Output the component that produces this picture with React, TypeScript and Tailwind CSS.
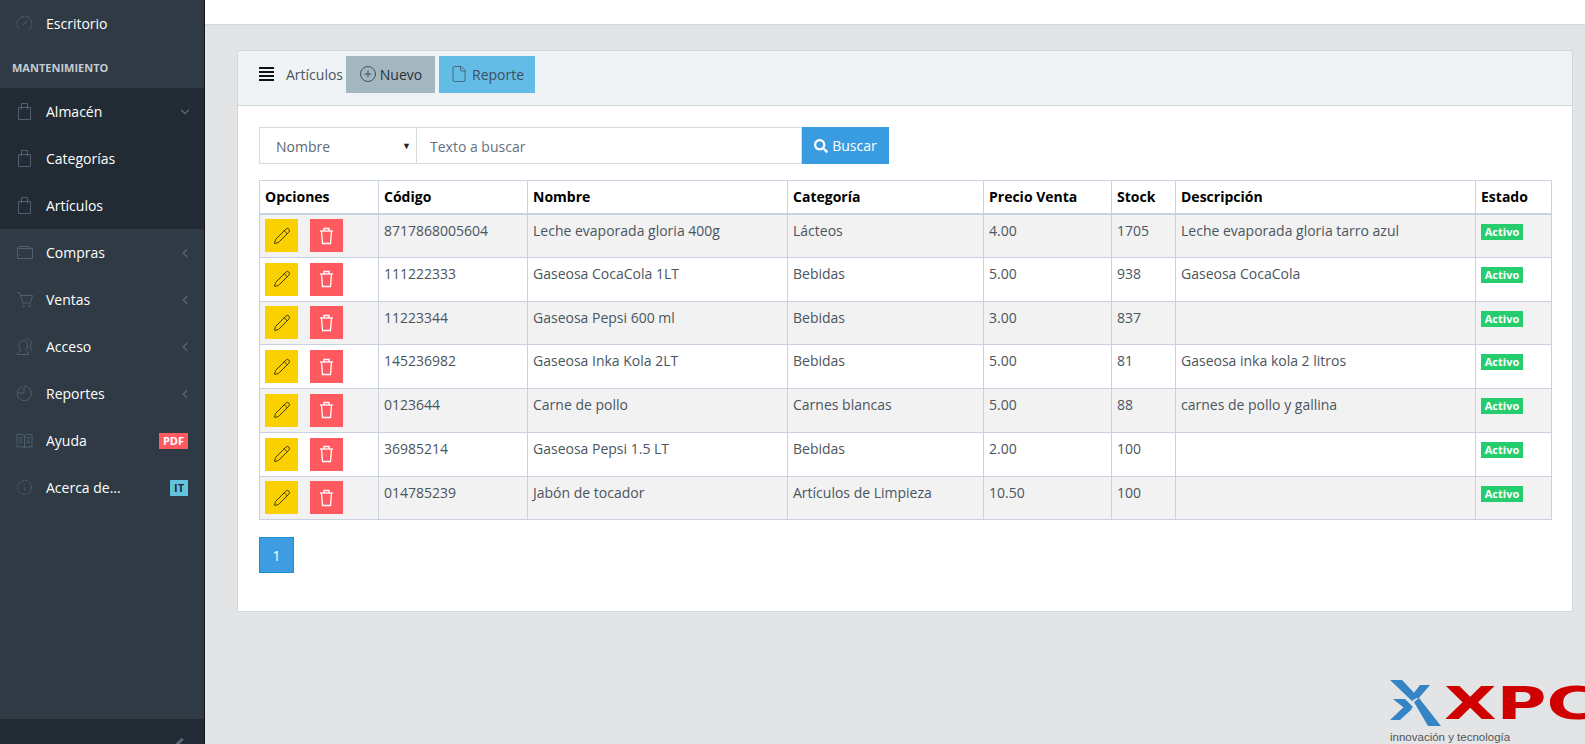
import React from 'react';
import { ChevronDown, ChevronLeft, CirclePlus, File, Info, Pencil } from 'lucide-react';
import { FaSearch } from 'react-icons/fa';

const rows = [
    ['8717868005604', 'Leche evaporada gloria 400g', 'Lácteos', '4.00', '1705', 'Leche evaporada gloria tarro azul'],
    ['111222333', 'Gaseosa CocaCola 1LT', 'Bebidas', '5.00', '938', 'Gaseosa CocaCola'],
    ['11223344', 'Gaseosa Pepsi 600 ml', 'Bebidas', '3.00', '837', ''],
    ['145236982', 'Gaseosa Inka Kola 2LT', 'Bebidas', '5.00', '81', 'Gaseosa inka kola 2 litros'],
    ['0123644', 'Carne de pollo', 'Carnes blancas', '5.00', '88', 'carnes de pollo y gallina'],
    ['36985214', 'Gaseosa Pepsi 1.5 LT', 'Bebidas', '2.00', '100', ''],
    ['014785239', 'Jabón de tocador', 'Artículos de Limpieza', '10.50', '100', ''],
];

function LineIcon({ children }: { children: React.ReactNode }) {
    return (
        <svg width="17" height="17" viewBox="0 0 17 17" fill="none" stroke="currentColor" strokeWidth="1">
            {children}
        </svg>
    );
}

const GaugeIcon = (
    <LineIcon>
        <path d="M3.5 14.5a7.5 7.5 0 1 1 10 0" strokeDasharray="5 1.2" />
        <path d="M6.5 10l5-4" />
    </LineIcon>
);
const BagIcon = (
    <LineIcon>
        <path d="M2.5 4.5h12v12h-12z" />
        <path d="M5.5 6.5v-6h6v6" />
    </LineIcon>
);
const WalletIcon = (
    <LineIcon>
        <path d="M1.5 5v9.5h15v-10h-15z" />
        <path d="M1.5 5l1-2.5h11l1 2" />
        <path d="M3 11h1" />
    </LineIcon>
);
const CartIcon = (
    <LineIcon>
        <path d="M1 1.5h2.5l3.5 10.5h7.5l2-7.5h-12" />
        <circle cx="7.5" cy="15" r="0.8" />
        <circle cx="13.5" cy="15" r="0.8" />
    </LineIcon>
);
const UserIcon = (
    <LineIcon>
        <path d="M1 16.5c0-2.5 3-3 4-4-1.5-1.5-2-3-2-5 0-3 2-5 4.5-5s4 2 4 5c0 2-.5 3.500-2 5 1 1 3 1.500 3 4z" />
        <path d="M9.500 1c3-1 5.500 1 5.500 4.500 0 2-.5 3-1.500 4.500 1 .7 2.500 1.500 2.500 3" />
    </LineIcon>
);
const PieIcon = (
    <LineIcon>
        <path d="M6 2a7 7 0 1 0 9 8.500a7 7 0 0 0-2-7.500a7 7 0 0 0-5-2v7h-6.500" />
    </LineIcon>
);
const BookIcon = (
    <LineIcon>
        <path d="M8.500 3.500c-2-1.500-5-1.500-7.500-1v12.500c2.500-.5 5.500-.5 7.500 1 2-1.500 5-1.500 7.500-1v-12.500c-2.500-.5-5.500-.5-7.500 1z" />
        <path d="M8.500 3.500v12.500M3 5.500h3.500M3 8h3.500M3 10.500h3.500M10.500 5.500h3.500M10.500 8h3.500M10.500 10.500h3.500" />
    </LineIcon>
);

function TrashIcon() {
    return (
        <svg width="15" height="18" viewBox="0 0 15 18" fill="none" stroke="currentColor" strokeWidth="1.3">
            <path d="M1 4h13" />
            <path d="M5 4V1.500h5V4" />
            <path d="M2.500 4l1 12.500h8l1-12.500" />
        </svg>
    );
}

function NavItem({ icon, label, right }: { icon: React.ReactNode; label: string; right?: React.ReactNode }) {
    return (
        <div className="flex h-[47px] items-center pl-4 pr-4 text-[14px] text-white">
            <span className="flex w-[30px] shrink-0 justify-start text-[#4f6070]">{icon}</span>
            <span>{label}</span>
            <span className="ml-auto flex items-center">{right}</span>
        </div>
    );
}

const chevronLeft = <ChevronLeft size={14} strokeWidth={2.5} className="mr-[-4px] text-[#56646f]" />;

export default function App() {
    return (
        <div className="flex h-screen overflow-hidden bg-[#e2e4e6] font-['Open_Sans',sans-serif] text-[14px] text-[#4a5560]">
            {/* Sidebar */}
            <aside className="flex w-[205px] shrink-0 flex-col border-r border-[#10151c] bg-[#2f3a44]">
                <NavItem icon={GaugeIcon} label="Escritorio" />
                <div className="flex h-[41px] items-center pl-3 pt-[2px] text-[11px] font-bold text-[#c3ccd3]">MANTENIMIENTO</div>
                <div className="bg-[#222b33]">
                    <NavItem icon={BagIcon} label="Almacén" right={<ChevronDown size={14} strokeWidth={2.5} className="mr-[-4px] text-[#56646f]" />} />
                    <NavItem icon={BagIcon} label="Categorías" />
                    <NavItem icon={BagIcon} label="Artículos" />
                </div>
                <NavItem icon={WalletIcon} label="Compras" right={chevronLeft} />
                <NavItem icon={CartIcon} label="Ventas" right={chevronLeft} />
                <NavItem icon={UserIcon} label="Acceso" right={chevronLeft} />
                <NavItem icon={PieIcon} label="Reportes" right={chevronLeft} />
                <NavItem
                    icon={BookIcon}
                    label="Ayuda"
                    right={<span className="bg-[#ff5a5f] px-1 py-px text-[11px] font-bold leading-[14px] text-white">PDF</span>}
                />
                <NavItem
                    icon={<Info size={17} strokeWidth={1} />}
                    label="Acerca de..."
                    right={<span className="bg-[#63c2de] px-1 py-px text-[11px] font-bold leading-[14px] text-[#1f2a33]">IT</span>}
                />
                <div className="mt-auto flex h-[25px] items-end justify-end overflow-hidden bg-[#222b33] pr-6">
                    <div className="mb-[-5px] h-[12px] w-[3px] rotate-45 bg-[#56687a]"></div>
                </div>
            </aside>

            {/* Main */}
            <main className="flex min-w-0 flex-1 flex-col">
                <div className="h-[25px] shrink-0 border-b border-[#d3d6da] bg-white"></div>
                <div className="ml-[32px] mr-[12px] mt-[25px] h-[562px] shrink-0 border border-[#cfd8dc] bg-white">
                    <div className="flex h-[55px] items-center gap-1 border-b border-[#cfd8dc] bg-[#f0f3f5] pb-[8px] pl-[21px]">
                        <div className="mr-[8px] flex w-[15px] flex-col gap-[2px]">
                            <span className="h-[2px] bg-[#111]"></span>
                            <span className="h-[2px] bg-[#111]"></span>
                            <span className="h-[2px] bg-[#111]"></span>
                            <span className="h-[2px] bg-[#111]"></span>
                        </div>
                        <span className="mr-[-1px] text-[#4a5560]">Artículos</span>
                        <button className="flex h-[37px] w-[89px] items-center justify-center gap-[3px] bg-[#a4b7c1] text-[#27323a]">
                            <CirclePlus size={18} strokeWidth={1} /> Nuevo
                        </button>
                        <button className="flex h-[37px] w-[96px] items-center justify-center gap-1 bg-[#63bce6] text-[#3f4f5c]">
                            <File size={18} strokeWidth={1} /> Reporte
                        </button>
                    </div>

                    <div className="px-[21px] pt-[21px]">
                        <div className="flex h-[37px]">
                            <div className="flex w-[158px] items-center justify-between border border-[#d5dce2] pl-[16px] pr-[5px] pt-[2px] text-[#5c6873]">
                                <span>Nombre</span>
                                <span className="mb-[2px] text-[9px] text-[#222]">▼</span>
                            </div>
                            <div className="flex w-[385px] items-center border-y border-r border-[#d5dce2] pl-[13px] pt-[2px] text-[#66727d]">Texto a buscar</div>
                            <button className="flex w-[87px] items-center justify-center gap-1 bg-[#3a9ce0] text-white">
                                <FaSearch size={14} /> Buscar
                            </button>
                        </div>

                        <table className="mt-[16px] w-[1292px] table-fixed border-collapse border border-[#c8d3df]">
                            <colgroup>
                                <col className="w-[119px]" />
                                <col className="w-[149px]" />
                                <col className="w-[260px]" />
                                <col className="w-[196px]" />
                                <col className="w-[128px]" />
                                <col className="w-[64px]" />
                                <col className="w-[300px]" />
                                <col className="w-[76px]" />
                            </colgroup>
                            <thead>
                                <tr className="h-[33px] border-b-2 border-[#c8d3df] text-left font-bold text-black">
                                    {['Opciones', 'Código', 'Nombre', 'Categoría', 'Precio Venta', 'Stock', 'Descripción', 'Estado'].map((h) => (
                                        <th key={h} className="border border-[#c8d3df] px-[5px] font-bold">{h}</th>
                                    ))}
                                </tr>
                            </thead>
                            <tbody>
                                {rows.map((r, i) => (
                                    <tr key={r[0]} className={i % 2 === 0 ? 'h-[43.75px] bg-[#f2f2f2]' : 'h-[43.75px] bg-white'}>
                                        <td className="border border-[#c8d3df] px-[5px] align-middle">
                                            <div className="flex gap-3">
                                                <button className="flex h-[33px] w-[33px] items-center justify-center bg-[#fbd000] text-[#3b3100]">
                                                    <Pencil size={18} strokeWidth={1.25} />
                                                </button>
                                                <button className="flex h-[33px] w-[33px] items-center justify-center bg-[#ff5a5f] text-white">
                                                    <TrashIcon />
                                                </button>
                                            </div>
                                        </td>
                                        {r.map((c, j) => (
                                            <td key={j} className="border border-[#c8d3df] px-[5px] pb-[10px] pt-[5px] align-top">{c}</td>
                                        ))}
                                        <td className="border border-[#c8d3df] px-[5px] pb-[10px] pt-[5px] align-top">
                                            <span className="mt-[4px] block w-[42px] bg-[#25cd6f] text-center text-[11px] font-bold leading-[16px] text-white">Activo</span>
                                        </td>
                                    </tr>
                                ))}
                            </tbody>
                        </table>

                        <button className="mt-[17px] h-[36px] w-[35px] border border-[#1b8eda] bg-[#3f9ce0] text-white">1</button>
                    </div>
                </div>

                {/* Logo */}
                <div className="mt-[68px] flex w-full justify-end">
                    <div className="w-[195px] overflow-hidden">
                        <div className="flex h-[47px] items-center">
                            <svg width="51" height="47" viewBox="0 0 51 47" className="shrink-0">
                                <g fill="#3584c6">
                                    <polygon points="0,0 12,0 28,17 22,21" />
                                    <polygon points="30,5 40,5 28,19 23,14" />
                                    <polygon points="24,22 29,18 51,46 38,46" />
                                    <polygon points="3,19 15,19 23,27 18,31" />
                                    <polygon points="0,40 10,40 22,29 17,24" />
                                </g>
                            </svg>
                            <span className="ml-[3px] origin-left scale-x-[1.55] whitespace-nowrap font-['DejaVu_Sans',sans-serif] text-[44px] font-bold leading-none text-[#d00000]">XPC</span>
                        </div>
                        <div className="mt-[3px] whitespace-nowrap font-['Liberation_Sans',sans-serif] text-[11.5px] leading-[14px] text-[#555]">innovación y tecnología</div>
                    </div>
                </div>
            </main>
        </div>
    );
}
